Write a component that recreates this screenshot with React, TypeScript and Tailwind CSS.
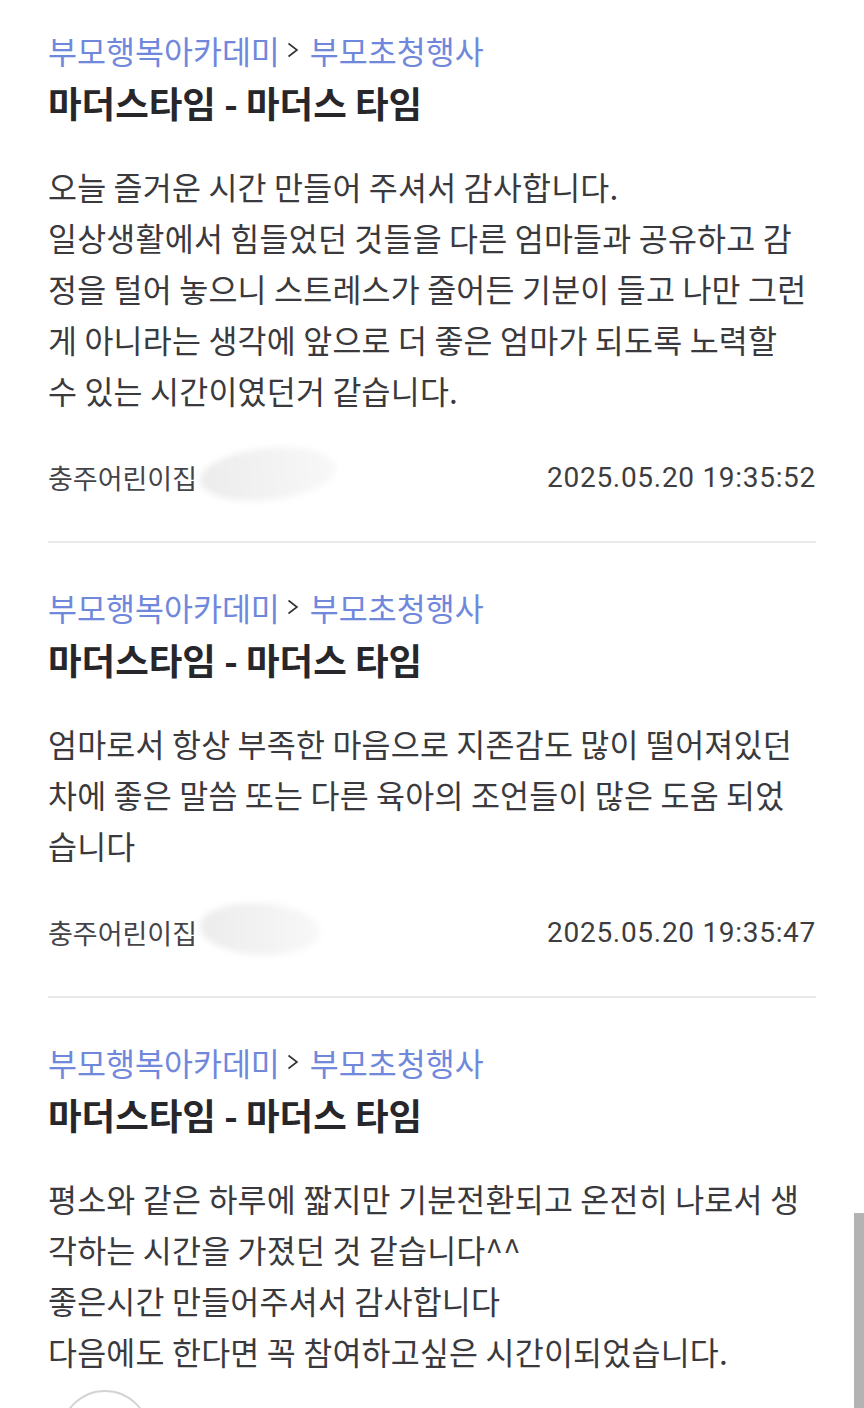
import React from 'react';

type Post = {
  id: number;
  lines: string[];
  author: string;
  date: string;
  blob: string;
};

const posts: Post[] = [
  {
    id: 1,
    lines: [
      '오늘 즐거운 시간 만들어 주셔서 감사합니다.',
      '일상생활에서 힘들었던 것들을 다른 엄마들과 공유하고 감',
      '정을 털어 놓으니 스트레스가 줄어든 기분이 들고 나만 그런',
      '게 아니라는 생각에 앞으로 더 좋은 엄마가 되도록 노력할',
      '수 있는 시간이였던거 같습니다.',
    ],
    author: '충주어린이집',
    date: '2025.05.20 19:35:52',
    blob: 'w-[136px] -rotate-6',
  },
  {
    id: 2,
    lines: [
      '엄마로서 항상 부족한 마음으로 지존감도 많이 떨어져있던',
      '차에 좋은 말씀 또는 다른 육아의 조언들이 많은 도움 되었',
      '습니다',
    ],
    author: '충주어린이집',
    date: '2025.05.20 19:35:47',
    blob: 'w-[120px] rotate-3',
  },
  {
    id: 3,
    lines: [
      '평소와 같은 하루에 짧지만 기분전환되고 온전히 나로서 생',
      '각하는 시간을 가졌던 것 같습니다^^',
      '좋은시간 만들어주셔서 감사합니다',
      '다음에도 한다면 꼭 참여하고싶은 시간이되었습니다.',
    ],
    author: '',
    date: '',
    blob: '',
  },
];

const kr = "font-['Noto_Sans_CJK_KR','Noto_Sans',sans-serif]";

function PostItem({ post, last }: { post: Post; last: boolean }) {
  return (
    <article>
      {/* 카테고리 경로 */}
      <div className={`flex h-[40px] items-center text-[31.5px] leading-[40px] text-[#6f88dc] ${kr}`}>
        <span>부모행복아카데미</span>
        <svg className="ml-[7px] mr-[11px] h-[16px] w-[12px] text-[#333]" viewBox="0 0 12 16" fill="none" stroke="currentColor" strokeWidth={1.6}>
          <path d="M1.5 1.5 L10 8 L1.5 14.5" />
        </svg>
        <span>부모초청행사</span>
      </div>

      <h2 className={`mt-[11px] text-[36.5px] font-bold leading-[44px] text-[#27272b] ${kr}`}>
        마더스타임 - 마더스 타임
      </h2>

      <div className={`mt-[36px] text-[31.5px] leading-[51px] tracking-[0.2px] text-[#3a3a3e] ${kr}`}>
        {post.lines.map((line, i) => (
          <p key={i} className="whitespace-nowrap">
            {line}
          </p>
        ))}
      </div>

      {!last && (
        <>
          <div className="mt-[44px] flex h-[36px] items-center justify-between">
            <div className="relative flex items-center">
              <span className={`text-[27px] text-[#444448] ${kr}`}>{post.author}</span>
              {/* 가려진 이름 */}
              <span
                className={`absolute left-[152px] top-[-10px] h-[52px] rounded-[50%] bg-gradient-to-r from-[#ececec] to-[#f8f8f8] blur-[3px] ${post.blob}`}
              />
            </div>
            <span className="font-['Roboto',sans-serif] text-[28px] tracking-[0.7px] text-[#3d3d40]">{post.date}</span>
          </div>
          <div className="mt-[45px] mb-[44px] h-[2px] bg-[#e9e9e9]" />
        </>
      )}
    </article>
  );
}

export default function App() {
  return (
    <div className="relative h-[1408px] overflow-hidden bg-white">
      <main className="px-[48px] pt-[30px]">
        {posts.map((post, i) => (
          <PostItem key={post.id} post={post} last={i === posts.length - 1} />
        ))}
      </main>

      {/* 플로팅 버튼 */}
      <div className="absolute left-[60px] top-[1390px] h-[90px] w-[90px] rounded-full border-2 border-[#d4d4d4] bg-white" />

      {/* 스크롤바 */}
      <div className="absolute right-0 top-[1213px] h-[200px] w-[10px] bg-[#b3b3b3]" />
    </div>
  );
}
